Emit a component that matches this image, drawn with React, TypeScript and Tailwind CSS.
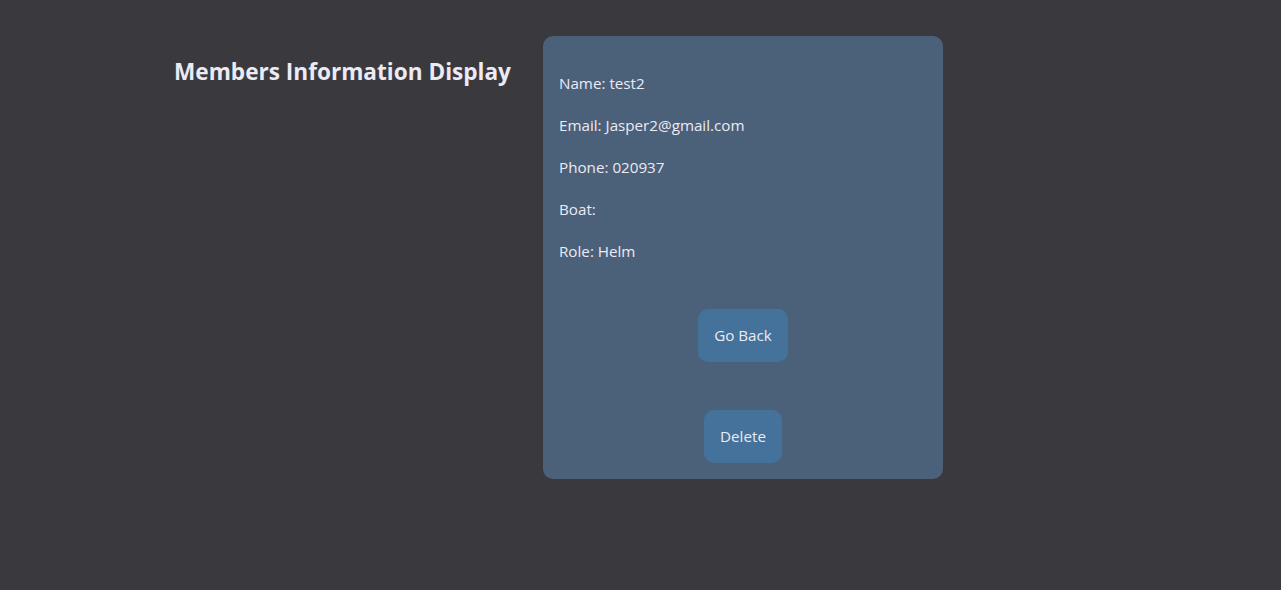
export default function App() {
  const fields = [
    { label: "Name", value: "test2" },
    { label: "Email", value: "Jasper2@gmail.com" },
    { label: "Phone", value: "020937" },
    { label: "Boat", value: "" },
    { label: "Role", value: "Helm" },
  ];

  return (
    <div className="min-h-screen w-full bg-[#3a393e] font-['Open_Sans',sans-serif] text-[#eceaf4]">
      <div className="flex items-start gap-[32px] pl-[174px] pt-[36px]">
        <h1 className="mt-[21px] w-[337px] whitespace-nowrap text-[22.6px] font-bold leading-[30px]">
          Members Information Display
        </h1>

        <div className="flex h-[443px] w-[400px] flex-col rounded-[10px] bg-[#4b6079] px-4 pb-[15px] pt-[35px]">
          <div className="flex flex-col gap-[18px]">
            {fields.map((f) => (
              <p key={f.label} className="text-[15.2px] leading-[24px]">
                {f.label}: {f.value}
              </p>
            ))}
          </div>

          <div className="mt-[46px] flex flex-col items-center gap-[48px]">
            <button className="h-[53px] rounded-[10px] bg-[#44729a] px-4 text-[15.2px]">Go Back</button>
            <button className="h-[53px] rounded-[10px] bg-[#44729a] px-4 text-[15.2px]">Delete</button>
          </div>
        </div>
      </div>
    </div>
  );
}
